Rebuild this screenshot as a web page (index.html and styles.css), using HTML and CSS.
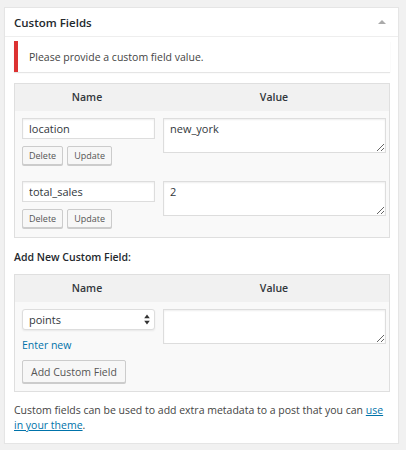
FILE: index.html
```html
<!DOCTYPE html>
<html>
<head>
<meta charset="utf-8">
<link rel="stylesheet" href="styles.css">
</head>
<body>
<div class="postbox">
  <div class="box-head">
    <h2 class="box-title">Custom Fields</h2>
    <span class="toggle-arrow"></span>
  </div>
  <div class="inside">
    <div class="notice"><p>Please provide a custom field value.</p></div>

    <div class="cf-table">
      <div class="cf-head">
        <div class="th">Name</div>
        <div class="th">Value</div>
      </div>
      <div class="cf-row">
        <div class="cf-name">
          <input class="text-input" type="text" value="location">
          <div class="btns">
            <button class="btn-small">Delete</button>
            <button class="btn-small">Update</button>
          </div>
        </div>
        <textarea class="cf-value">new_york</textarea>
      </div>
      <div class="cf-row">
        <div class="cf-name">
          <input class="text-input" type="text" value="total_sales">
          <div class="btns">
            <button class="btn-small">Delete</button>
            <button class="btn-small">Update</button>
          </div>
        </div>
        <textarea class="cf-value">2</textarea>
      </div>
    </div>

    <p class="add-title">Add New Custom Field:</p>

    <div class="cf-table">
      <div class="cf-head">
        <div class="th">Name</div>
        <div class="th">Value</div>
      </div>
      <div class="cf-row new-row">
        <div class="cf-name">
          <div class="select-wrap">
            <select class="select-input"><option>points</option></select>
            <svg class="select-arrows" width="6" height="11" viewBox="0 0 6 11"><path d="M3 0.5 L5.8 4.2 L0.2 4.2 Z M3 10.5 L5.8 6.8 L0.2 6.8 Z" fill="#333"/></svg>
          </div>
          <a class="enter-new" href="#">Enter new</a>
        </div>
        <textarea class="cf-value"></textarea>
      </div>
      <div class="add-row">
        <button class="btn">Add Custom Field</button>
      </div>
    </div>

    <p class="footer-text">Custom fields can be used to add extra metadata to a post that you can <a href="#">use in your theme</a>.</p>
  </div>
</div>
</body>
</html>
```

FILE: styles.css
```css
html, body {
  margin: 0;
  padding: 0;
  background: #f1f1f1;
}
body {
  padding-top: 7px;
  font-family: "Open Sans", "DejaVu Sans", sans-serif;
  color: #444;
  font-size: 10.5px;
}
.postbox {
  margin-left: 4px;
  width: 393px;
  background: #fff;
  border: 1px solid #e5e5e5;
  box-shadow: 0 1px 1px rgba(0,0,0,.04);
}
.box-head {
  height: 28px;
  border-bottom: 1px solid #eee;
  display: flex;
  align-items: center;
  justify-content: space-between;
  padding: 0 12px 0 9px;
}
.box-title {
  margin: 0;
  font-size: 11.5px;
  font-weight: 600;
  color: #23282d;
}
.toggle-arrow {
  width: 0;
  height: 0;
  border-left: 4px solid transparent;
  border-right: 4px solid transparent;
  border-bottom: 4px solid #aaa;
}
.inside {
  padding: 4px 8px 10px 9px;
}
.notice {
  background: #fff;
  border-left: 4px solid #dc3232;
  box-shadow: 0 1px 1px rgba(0,0,0,.1);
  height: 31px;
  display: flex;
  align-items: center;
  padding-left: 11px;
}
.notice p {
  margin: 0;
  font-size: 10.5px;
}
.cf-table {
  border: 1px solid #dfdfdf;
  background: #f9f9f9;
  margin-top: 11px;
}
.cf-head {
  display: grid;
  grid-template-columns: 144px 1fr;
  background: #f1f1f1;
  height: 27px;
  align-items: center;
}
.th {
  text-align: center;
  font-weight: 600;
  font-size: 10.5px;
  color: #32373c;
  padding-bottom: 2px;
}
.cf-row {
  display: grid;
  grid-template-columns: 141px 1fr;
  align-items: start;
  padding: 7px 3px 9px 7px;
}
.cf-name {
  display: flex;
  flex-direction: column;
  align-items: flex-start;
}
.text-input {
  box-sizing: border-box;
  width: 133px;
  height: 21px;
  margin: 0;
  padding: 0 6px;
  border: 1px solid #ddd;
  box-shadow: inset 0 1px 2px rgba(0,0,0,.07);
  background: #fff;
  font-family: "Open Sans", sans-serif;
  font-size: 11px;
  color: #32373c;
  outline: none;
}
.btns {
  display: flex;
  gap: 4px;
  margin-top: 7px;
}
.btn-small, .btn {
  box-sizing: border-box;
  margin: 0;
  background: #f7f7f7;
  border: 1px solid #ccc;
  border-radius: 2px;
  box-shadow: 0 1px 0 #ccc;
  color: #555;
  font-family: "Open Sans", sans-serif;
  cursor: pointer;
}
.btn-small {
  height: 19px;
  padding: 0 6px;
  font-size: 9px;
}
.cf-value {
  box-sizing: border-box;
  display: block;
  width: 100%;
  height: 35px;
  margin: 0;
  padding: 2px 6px;
  border: 1px solid #ddd;
  box-shadow: inset 0 1px 2px rgba(0,0,0,.07);
  background: #fff;
  font-family: "Open Sans", sans-serif;
  font-size: 11px;
  color: #32373c;
  outline: none;
}
.add-title {
  margin: 12px 0 0;
  font-weight: 600;
  font-size: 10.5px;
  color: #23282d;
  line-height: 15px;
}
.add-title + .cf-table {
  margin-top: 9px;
}
.new-row {
  padding-bottom: 0;
}
.select-wrap {
  position: relative;
  width: 133px;
  height: 21px;
}
.select-input {
  box-sizing: border-box;
  width: 133px;
  height: 21px;
  margin: 0;
  padding: 0 6px;
  border: 1px solid #ddd;
  border-radius: 3px;
  background: #fff;
  box-shadow: 0 1px 2px rgba(0,0,0,.07);
  appearance: none;
  -webkit-appearance: none;
  font-family: "Open Sans", sans-serif;
  font-size: 11px;
  color: #32373c;
  outline: none;
}
.select-arrows {
  position: absolute;
  right: 5px;
  top: 5px;
}
.enter-new {
  margin-top: 8px;
  font-size: 10.5px;
  line-height: 15px;
  color: #0073aa;
  text-decoration: none;
}
.add-row {
  padding: 7px 7px 8px;
}
.btn {
  height: 23px;
  padding: 0 8px;
  font-size: 10.5px;
}
.footer-text {
  margin: 11px 0 0;
  font-size: 10.5px;
  line-height: 15px;
}
.footer-text a {
  color: #0073aa;
  text-decoration: underline;
}
```
